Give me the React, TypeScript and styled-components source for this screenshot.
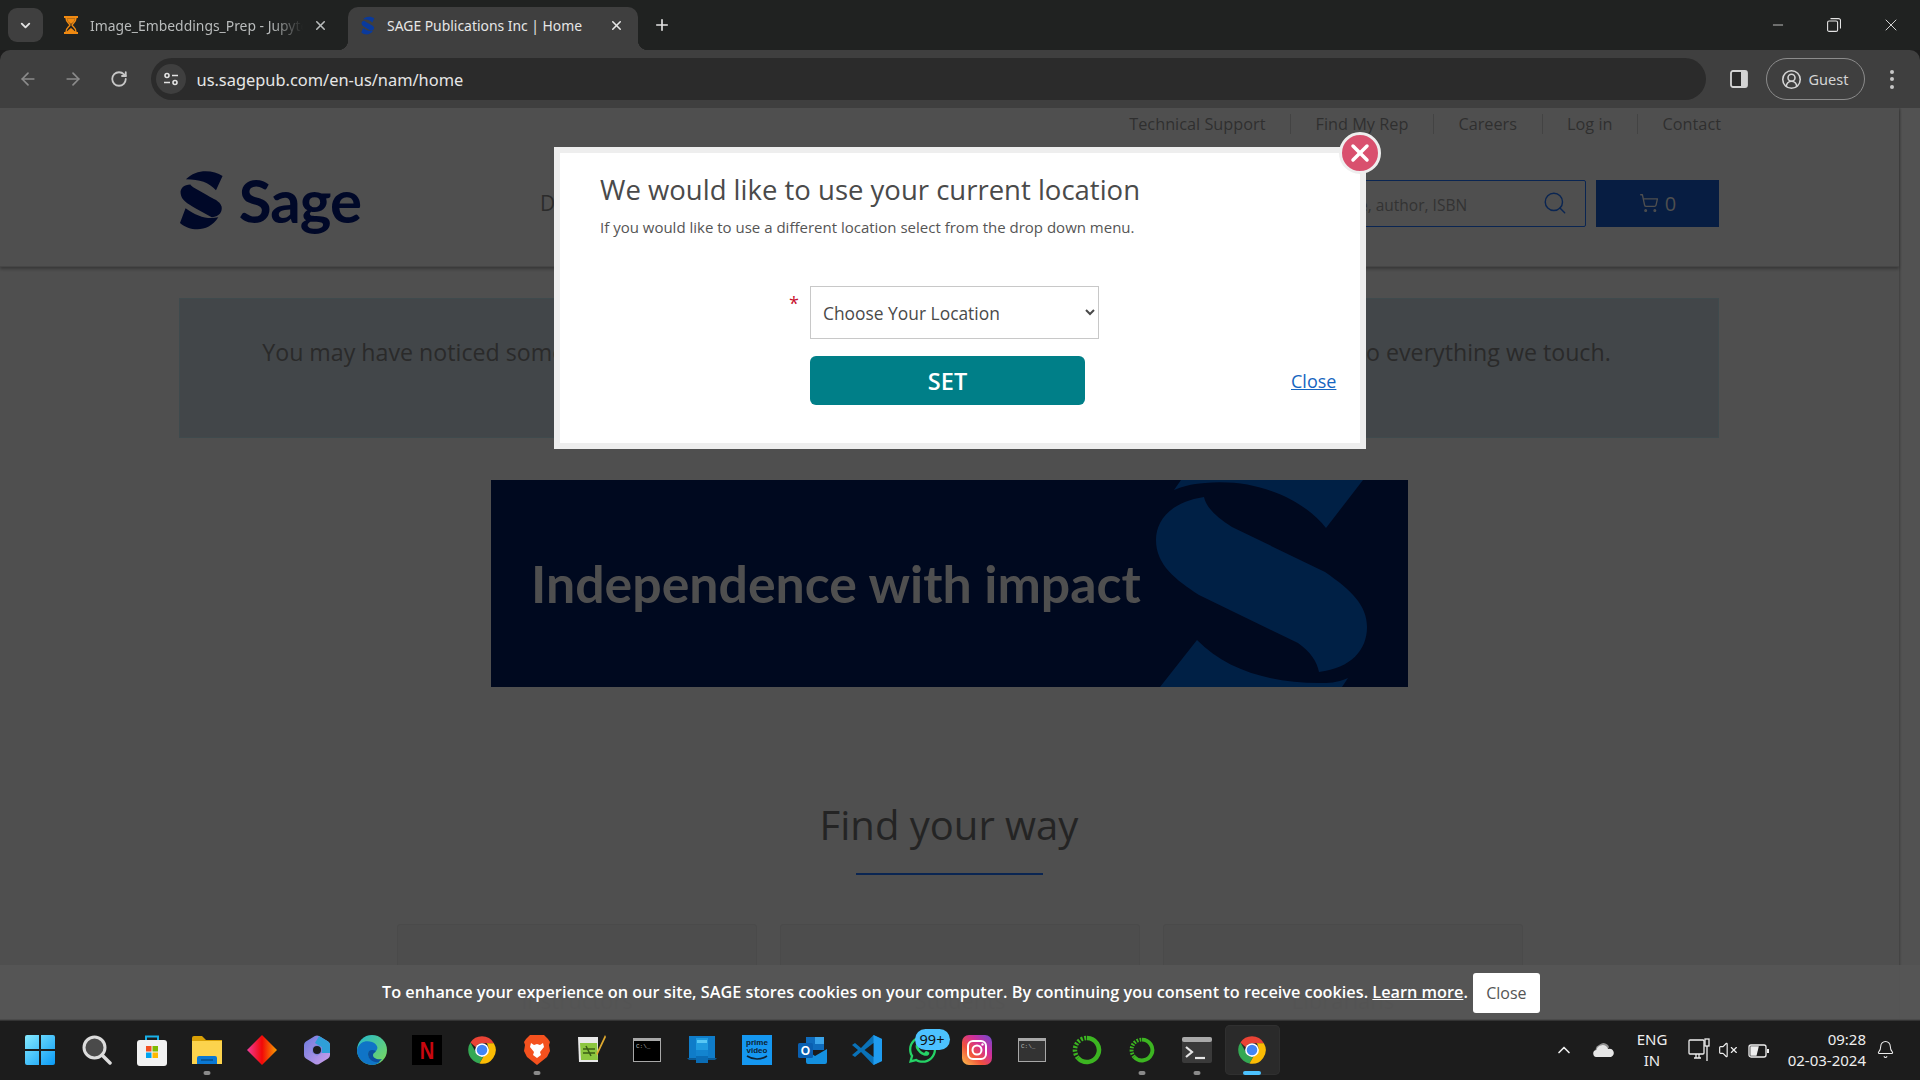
import React from "react";
import styled, { createGlobalStyle } from "styled-components";
import { FaWhatsapp } from "react-icons/fa";
import { ArrowLeft, ArrowRight, RotateCw, ChevronDown, ChevronUp, X, Plus, Minus, CircleUserRound, VolumeX, Bell, Search, ShoppingCart } from "lucide-react";

const GlobalStyle = createGlobalStyle`
  html, body { margin: 0; padding: 0; background: #1c1c1c; overflow: hidden; }
  * { box-sizing: border-box; }
`;

const chromeFont = `"Noto Sans", "Open Sans", sans-serif`;
const pageFont = `"Open Sans", "Noto Sans", sans-serif`;

const Screen = styled.div`
  width: 1920px;
  height: 1080px;
  display: flex;
  flex-direction: column;
  overflow: hidden;
  font-family: ${chromeFont};
`;

/* browser chrome */
const TabStrip = styled.div`
  height: 50px;
  flex: none;
  display: flex;
  align-items: flex-end;
  background: #202221;
  padding-left: 8px;
  color: #e3e3e3;
`;
const TabSearch = styled.div`
  width: 35px;
  height: 34px;
  margin-bottom: 8px;
  border-radius: 9px;
  background: #3f3f3f;
  display: flex;
  align-items: center;
  justify-content: center;
`;
const Tab = styled.div<{ $active?: boolean }>`
  position: relative;
  height: 43px;
  width: ${(p) => (p.$active ? 290 : 299)}px;
  margin-left: ${(p) => (p.$active ? 0 : 6)}px;
  padding: 0 ${(p) => (p.$active ? 14 : 20)}px 7px ${(p) => (p.$active ? 13 : 13)}px;
  display: flex;
  align-items: center;
  gap: ${(p) => (p.$active ? 12 : 10)}px;
  font-size: 13.900px;
  color: ${(p) => (p.$active ? "#e6e6e6" : "#b9bcbc")};
  background: ${(p) => (p.$active ? "#3f3f3f" : "transparent")};
  border-radius: 10px 10px 0 0;
  ${(p) =>
    p.$active
      ? `
    &::before, &::after {
      content: "";
      position: absolute;
      bottom: 0;
      width: 10px;
      height: 10px;
    }
    &::before { left: -10px; background: radial-gradient(circle at 0 0, transparent 10px, #3f3f3f 10.500px); }
    &::after { right: -10px; background: radial-gradient(circle at 100% 0, transparent 10px, #3f3f3f 10.500px); }
  `
      : ""}
`;
const TabTitle = styled.span<{ $fade?: boolean }>`
  flex: 1;
  white-space: nowrap;
  overflow: hidden;
  ${(p) => (p.$fade ? "mask-image: linear-gradient(90deg, #000 85%, transparent);" : "")}
`;
const NewTab = styled.div`
  width: 48px;
  margin-bottom: 16px;
  display: flex;
  justify-content: center;
`;
const WindowControls = styled.div`
  margin-left: auto;
  height: 50px;
  display: flex;
  align-items: center;
  padding-right: 1px;
`;
const WindowButton = styled.div`
  width: 56.500px;
  display: flex;
  justify-content: center;
`;

const Toolbar = styled.div`
  height: 58px;
  flex: none;
  display: flex;
  align-items: center;
  background: #3f3f3f;
  border-radius: 10px 10px 0 0;
  padding: 0 18px 0 5px;
  color: #c7c7c7;
`;
const NavButton = styled.div<{ $dim?: boolean }>`
  width: 45.500px;
  display: flex;
  justify-content: center;
  color: ${(p) => (p.$dim ? "#8b8b8b" : "#c7c7c7")};
`;
const Omnibox = styled.div`
  width: 1555px;
  height: 42px;
  margin-left: 9px;
  border-radius: 21px;
  background: #2b2b2b;
  display: flex;
  align-items: center;
  padding-left: 5px;
  gap: 11px;
  font-size: 16.400px;
  color: #e6e6e6;
`;
const SiteInfo = styled.div`
  width: 30px;
  height: 30px;
  border-radius: 50%;
  background: #3f3f3f;
  display: flex;
  align-items: center;
  justify-content: center;
`;
const ToolbarRight = styled.div`
  display: flex;
  align-items: center;
  margin-left: 24px;
`;
const GuestPill = styled.div`
  width: 99px;
  height: 42px;
  margin-left: 18px;
  border: 1px solid #8c8c8c;
  border-radius: 21px;
  display: flex;
  align-items: center;
  gap: 7px;
  padding-left: 14px;
  font-size: 14.500px;
  color: #d4d4d4;
`;
const MenuDots = styled.div`
  margin-left: 25px;
  display: flex;
  flex-direction: column;
  gap: 3.500px;
  span {
    width: 4px;
    height: 4px;
    border-radius: 50%;
    background: #c7c7c7;
  }
`;

/* page behind the dialog */
const PageArea = styled.div`
  position: relative;
  flex: 1;
  background: #525252;
  overflow: hidden;
  font-family: ${pageFont};
`;
const Page = styled.div`
  width: 1899px;
  height: 100%;
  background: #4f4f4f;
  box-shadow: 1px 0 2px rgba(0, 0, 0, 0.25);
`;
const Header = styled.header`
  height: 159px;
  padding: 0 179px;
  border-bottom: 1px solid #464646;
  box-shadow: 0 2px 3px rgba(0, 0, 0, 0.3);
`;
const TopLinks = styled.nav`
  height: 32px;
  margin-right: -1px;
  display: flex;
  justify-content: flex-end;
  align-items: center;
`;
const TopLink = styled.a`
  font-size: 16.300px;
  color: #2f2f2f;
  padding: 0 24.500px;
  border-left: 1px solid #434343;
  line-height: 20px;
  &:first-child { border-left: 0; }
  &:last-child { padding-right: 0; }
`;
const HeaderMain = styled.div`
  height: 126px;
  display: flex;
  align-items: center;
`;
const Logo = styled.div`
  width: 182px;
  display: flex;
  align-items: center;
  gap: 14px;
  color: #000828;
  font-family: Lato, sans-serif;
  font-weight: 700;
  font-size: 60px;
  letter-spacing: -1px;
  line-height: 1;
  margin-top: -6px;
`;
const NavItem = styled.span`
  margin-left: 179px;
  font-size: 21px;
  color: #2b2b2b;
  white-space: nowrap;
`;
const HeaderTools = styled.div`
  margin-left: auto;
  margin-right: 1px;
  display: flex;
  gap: 10px;
`;
const SearchBox = styled.div`
  width: 300px;
  height: 47px;
  border: 1px solid #0a2552;
  border-radius: 2px;
  display: flex;
  align-items: center;
  justify-content: flex-end;
  padding-right: 17px;
  gap: 75px;
  font-size: 15.500px;
  color: #333;
  white-space: nowrap;
  span { margin-top: 3px; }
  svg { color: #0a2552; }
`;
const CartButton = styled.div`
  width: 123px;
  height: 47px;
  background: #071d42;
  display: flex;
  align-items: center;
  justify-content: center;
  gap: 6px;
  font-size: 20px;
  color: #4f4f4f;
`;
const Container = styled.div`
  width: 1540px;
  margin: 0 0 0 179px;
`;
const Notice = styled.div`
  height: 140px;
  margin-top: 31px;
  background: #424649;
  border: 1px solid #3f4a4d;
  padding: 28px 25px 0 0;
  text-align: center;
  font-size: 23.200px;
  line-height: 50px;
  color: #2a2a2a;
  white-space: nowrap;
`;
const Banner = styled.div`
  position: relative;
  width: 917px;
  height: 207px;
  margin: 42px 0 0 312px;
  background: #00091f;
  display: flex;
  align-items: center;
  padding: 0 0 2px 40px;
  overflow: hidden;
  font-family: Lato, sans-serif;
  font-weight: 700;
  font-size: 51.800px;
  color: #4f4f4f;
`;
const BannerMark = styled.svg`
  position: absolute;
  inset: 0;
`;
const SectionTitle = styled.h2`
  margin: 109px 0 0;
  text-align: center;
  font-weight: 400;
  font-size: 40px;
  line-height: 58px;
  color: #242424;
`;
const TitleRule = styled.div`
  width: 187px;
  height: 2px;
  margin: 19px auto 0;
  background: #0a2552;
`;
const Cards = styled.div`
  margin: 49px 0 0 218px;
  width: 1125px;
  display: grid;
  grid-template-columns: repeat(3, 360px);
  gap: 23px;
`;
const Card = styled.div`
  height: 200px;
  border: 1px solid #4a4a4a;
  border-radius: 3px;
  background: #4d4d4d;
  padding-top: 60px;
  text-align: center;
  font-size: 22px;
  color: #3c3c3c;
`;

/* cookie bar */
const CookieBar = styled.div`
  position: absolute;
  left: 0;
  right: 0;
  bottom: 0;
  height: 55px;
  background: rgba(86, 86, 86, 0.92);
  border-bottom: 1px solid #4a4a4a;
  display: flex;
  align-items: center;
  padding-left: 382px;
  gap: 5px;
`;
const CookieText = styled.p`
  margin: 0;
  font-size: 16.270px;
  font-weight: 600;
  color: #fff;
  white-space: nowrap;
  a { text-decoration: underline; }
`;
const CookieClose = styled.button`
  width: 67px;
  height: 40px;
  margin-top: 2px;
  border: 0;
  border-radius: 3px;
  background: #fff;
  color: #555;
  font-family: ${pageFont};
  font-size: 16px;
`;

/* dialog */
const Modal = styled.div`
  position: absolute;
  left: 554px;
  top: 39px;
  width: 812px;
  height: 302px;
  background: #fff;
  border: 6px solid #eee;
  padding: 0 0 0 40px;
  color: #4a4a4a;
`;
const ModalTitle = styled.h3`
  margin: 15px 0 0;
  font-weight: 400;
  font-size: 27.500px;
  line-height: 44px;
  color: #4a4a4a;
`;
const ModalHint = styled.p`
  margin: 3px 0 0;
  font-size: 15px;
  line-height: 24px;
  color: #555;
`;
const FormRow = styled.div`
  margin: 47px 0 0 210px;
  display: flex;
  align-items: center;
`;
const Required = styled.span`
  width: 0;
  margin-left: -21px;
  margin-right: 21px;
  margin-top: -20px;
  color: #c8102e;
  font-size: 18px;
`;
const LocationSelect = styled.select`
  width: 289px;
  height: 53px;
  padding-left: 8px;
  border: 1px solid #c8c8c8;
  background: #fff;
  color: #4a4a4a;
  font-family: ${pageFont};
  font-size: 17.400px;
`;
const ActionRow = styled.div`
  margin: 17px 0 0 210px;
  display: flex;
  align-items: center;
`;
const SetButton = styled.button`
  width: 275px;
  height: 49px;
  border: 0;
  border-radius: 6px;
  background: #007f88;
  color: #fff;
  font-family: ${pageFont};
  font-weight: 600;
  font-size: 23.500px;
`;
const CloseLink = styled.a`
  margin-left: 206px;
  font-size: 18px;
  color: #1565c0;
  text-decoration: underline;
`;
const ModalDismiss = styled.div`
  position: absolute;
  left: 779px;
  top: -21px;
  width: 42px;
  height: 42px;
  border-radius: 50%;
  border: 3px solid #eee;
  background: #d9506e;
  color: #fff;
  display: flex;
  align-items: center;
  justify-content: center;
`;

/* taskbar */
const Taskbar = styled.footer`
  height: 60px;
  flex: none;
  background: #1c1c1c;
  border-top: 1px solid #333;
  display: flex;
  align-items: center;
  padding: 0 0 2px 12.500px;
`;
const TaskSlot = styled.div<{ $active?: boolean }>`
  position: relative;
  width: 55px;
  height: 50px;
  display: flex;
  align-items: center;
  justify-content: center;
  border-radius: 5px;
  ${(p) => (p.$active ? "background: #2a2a2a; box-shadow: inset 0 0 0 1px #303030;" : "")}
  &:first-child {
    width: 57px;
    padding-right: 2px;
  }
`;
const RunDot = styled.i<{ $active?: boolean }>`
  position: absolute;
  bottom: 0;
  left: 50%;
  transform: translateX(-50%);
  width: ${(p) => (p.$active ? 18 : 7)}px;
  height: 4px;
  border-radius: 2px;
  background: ${(p) => (p.$active ? "#4cc2ff" : "#8a8a8a")};
`;
const Badge = styled.span`
  position: absolute;
  left: 20px;
  top: 4px;
  width: 35px;
  height: 21px;
  border-radius: 10.500px;
  background: #4cc2ff;
  color: #111;
  font-size: 14.500px;
  line-height: 21px;
  text-align: center;
`;
const Tray = styled.div`
  margin-left: auto;
  display: flex;
  align-items: center;
  color: #eee;
  font-size: 15px;
  padding-right: 25px;
`;
const TrayIcon = styled.div<{ $w: number }>`
  width: ${(p) => p.$w}px;
  display: flex;
  justify-content: center;
`;
const Lang = styled.div`
  width: 50px;
  margin-right: 9px;
  text-align: center;
  line-height: 21px;
`;
const Clock = styled.div`
  width: 92px;
  text-align: right;
  line-height: 21px;
  margin-right: 10px;
`;

const SageMark = ({ size, color }: { size: number; color: string }) => (
  <svg width={size * 0.74} height={size} viewBox="25 30 140 190" fill={color}>
    <path d="M158 52C130 33 78 28 46 62C90 62 115 72 138 95Z" />
    <path d="M60 78C40 78 28 90 30 105C32 125 50 135 75 150L125 178C150 175 158 160 155 145C150 128 130 122 110 110L75 90C65 85 60 80 60 78Z" />
    <path d="M45 150L28 195C60 222 115 225 145 178C110 185 80 175 45 150Z" />
  </svg>
);

const Hourglass = () => (
  <svg width="18" height="18" viewBox="0 0 18 18">
    <path d="M2 1h14M2 17h14" stroke="#f08a12" strokeWidth="2" />
    <path d="M4 2h10c0 4-3 5-4 7 1 2 4 3 4 7H4c0-4 3-5 4-7-1-2-4-3-4-7z" fill="none" stroke="#f08a12" strokeWidth="1.400" />
    <path d="M5 3h8c-.5 3-3 4-4 5-1-1-3.500-2-4-5zM5 16c.5-2 3-3 4-4 1 1 3.500 2 4 4z" fill="#f08a12" />
  </svg>
);

const ChromeLogo = ({ size = 30 }: { size?: number }) => (
  <svg width={size} height={size} viewBox="0 0 48 48">
    <path d="M24 2a22 22 0 0 1 19 11H24a11 11 0 0 0-10 6.500L5.500 12A22 22 0 0 1 24 2z" fill="#ea4335" />
    <path d="M5.500 12L15 29a11 11 0 0 0 11 5.800L20 45.600A22 22 0 0 1 5.500 12z" fill="#34a853" />
    <path d="M43 13a22 22 0 0 1-23 32.600L29 29.500A11 11 0 0 0 31.500 13z" fill="#fbbc04" />
    <circle cx="24" cy="24" r="11" fill="#fff" />
    <circle cx="24" cy="24" r="8.500" fill="#4285f4" />
  </svg>
);

const WindowsIcon = () => (
  <svg width="30" height="30" viewBox="0 0 30 30">
    <defs>
      <linearGradient id="win" x1="0" y1="0" x2="1" y2="1">
        <stop offset="0" stopColor="#86eaff" />
        <stop offset="1" stopColor="#0a9af5" />
      </linearGradient>
    </defs>
    <path d="M2 0h12v14H0V2a2 2 0 0 1 2-2zM16 0h12a2 2 0 0 1 2 2v12H16zM0 16h14v14H2a2 2 0 0 1-2-2zM16 16h14v12a2 2 0 0 1-2 2H16z" fill="url(#win)" />
  </svg>
);
const SearchIcon = () => (
  <svg width="30" height="30" viewBox="0 0 30 30">
    <circle cx="12.500" cy="12.500" r="10.500" fill="#4a4a4a" stroke="#dcdcdc" strokeWidth="3" />
    <path d="M20 20l8 8" stroke="#dcdcdc" strokeWidth="3.500" strokeLinecap="round" />
  </svg>
);
const StoreIcon = () => (
  <svg width="30" height="32" viewBox="0 0 30 32">
    <path d="M9 7V2.500h12V7" fill="none" stroke="#18b0e8" strokeWidth="2" />
    <path d="M3 6h24a3 3 0 0 1 3 3v20a3 3 0 0 1-3 3H3a3 3 0 0 1-3-3V9a3 3 0 0 1 3-3z" fill="#f2f2f2" />
    <rect x="9" y="12" width="5.500" height="5.500" fill="#f25022" />
    <rect x="15.500" y="12" width="5.500" height="5.500" fill="#7fba00" />
    <rect x="9" y="18.500" width="5.500" height="5.500" fill="#00a4ef" />
    <rect x="15.500" y="18.500" width="5.500" height="5.500" fill="#ffb900" />
  </svg>
);
const FolderIcon = () => (
  <svg width="30" height="28" viewBox="0 0 30 28">
    <path d="M0 2a2 2 0 0 1 2-2h8l4 4h16v4H0z" fill="#d9a006" />
    <path d="M0 5h30v23H0z" fill="#fcd34d" />
    <path d="M5 22a2 2 0 0 1 2-2h16a2 2 0 0 1 2 2v6H5z" fill="#0a78d4" />
    <path d="M9 24h12" stroke="#064f8c" strokeWidth="1.500" />
  </svg>
);
const DiamondIcon = () => (
  <svg width="30" height="30" viewBox="0 0 30 30">
    <defs>
      <linearGradient id="dia" x1="0" y1="0" x2="1" y2="0">
        <stop offset="0" stopColor="#f03d9c" />
        <stop offset=".5" stopColor="#f20808" />
        <stop offset="1" stopColor="#f7a000" />
      </linearGradient>
    </defs>
    <path d="M15 0l15 15-15 15L0 15z" fill="url(#dia)" />
  </svg>
);
const CopilotIcon = () => (
  <svg width="28" height="30" viewBox="0 0 28 30">
    <defs>
      <linearGradient id="cop" x1="0" y1="0" x2="1" y2="1">
        <stop offset="0" stopColor="#7a80e0" />
        <stop offset="1" stopColor="#c09ae8" />
      </linearGradient>
    </defs>
    <path d="M14 4.500l9 5.500v10l-9 5.500L5 20V10z" fill="#7f84de" stroke="url(#cop)" strokeWidth="8" strokeLinejoin="round" />
    <path d="M14 4.500l9 5.500v8" fill="none" stroke="#2f9fd8" strokeWidth="8" strokeLinejoin="round" />
    <circle cx="14" cy="15" r="4" fill="#1c1c1c" />
  </svg>
);
const EdgeIcon = () => (
  <svg width="30" height="30" viewBox="0 0 30 30">
    <defs>
      <linearGradient id="edg" x1="0" y1="0" x2="1" y2="1">
        <stop offset="0" stopColor="#22b8cf" />
        <stop offset="1" stopColor="#7ed957" />
      </linearGradient>
    </defs>
    <circle cx="15" cy="15" r="15" fill="url(#edg)" />
    <path d="M0 15C2 6 10 5 15 7c5 2 7 6 4 9-4 0-8-1-8 3 0 4 5 8 12 8-3 2-5 3-8 3A15 15 0 0 1 0 15z" fill="#0f74c7" />
    <path d="M11 19c0-4 4-5 8-3-1 2-3 2-3 4 0 3 4 5 9 4-1 1-2 2-3 3-6 1-11-3-11-8z" fill="#0b4f9e" />
  </svg>
);
const NetflixIcon = () => (
  <svg width="30" height="30" viewBox="0 0 30 30">
    <rect width="30" height="30" fill="#000" />
    <text x="15" y="24" textAnchor="middle" fontFamily="Liberation Sans, sans-serif" fontWeight="700" fontSize="24" fill="#c8070f" transform="translate(2.400 0) scale(.84 1)">N</text>
  </svg>
);
const BraveIcon = () => (
  <svg width="26" height="30" viewBox="0 0 26 30">
    <path d="M6 0h14l4 4 2 3-1 3 1 6-3 6-10 8-10-8-3-6 1-6-1-3 2-3z" fill="#f4511e" />
    <path d="M7 8l3 2 3-1 3 1 3-2 1 4-4 5 1 3-4 3-4-3 1-3-4-5z" fill="#fff" />
  </svg>
);
const NotepadIcon = () => (
  <svg width="30" height="30" viewBox="0 0 30 30">
    <path d="M1 2h20v25H2z" fill="#e9e9e9" />
    <path d="M3 8h17l1 17H4z" fill="#8cc63f" />
    <path d="M6 14h12M6 18h12M9 11l5 10" stroke="#3b5d16" strokeWidth="1.500" fill="none" />
    <path d="M28 0l-9 19 1.500 1L29 2z" fill="#e0a92f" />
  </svg>
);
const CmdIcon = ({ light }: { light?: boolean }) => (
  <svg width="28" height="24" viewBox="0 0 28 24">
    <rect x=".5" y=".5" width="27" height="23" fill={light ? "#333" : "#000"} stroke="#a8a8a8" />
    <rect x="1" y="1" width="26" height="2" fill="#a8a8a8" />
    <text x="3" y="10" fontFamily="Liberation Mono, monospace" fontSize="6" fill="#bbb">C:\_</text>
  </svg>
);
const DeviceIcon = () => (
  <svg width="30" height="28" viewBox="0 0 30 28">
    <path d="M2 0h26v22H2z" fill="#0f7cc9" />
    <path d="M0 22h30l-2 2H2z" fill="#0a5a96" />
    <path d="M9 2h12v25H9z" fill="#1f9be0" />
    <path d="M9 14h12v6H9z" fill="#1384cf" />
    <path d="M9 20h12v7H9z" fill="#0a6cb5" />
    <path d="M10 4h10v3H10z" fill="#58c8f5" />
  </svg>
);
const PrimeIcon = () => (
  <svg width="30" height="30" viewBox="0 0 30 30">
    <rect width="30" height="30" fill="#1597f0" />
    <g fontFamily="Liberation Sans, sans-serif" fontWeight="700" fontSize="8" fill="#0d2233" textAnchor="middle">
      <text x="15" y="10">prime</text>
      <text x="15" y="18">video</text>
    </g>
    <path d="M5 21c6 4 14 4 20 0" stroke="#0d2233" strokeWidth="1.600" fill="none" />
  </svg>
);
const OutlookIcon = () => (
  <svg width="29" height="28" viewBox="0 0 29 28">
    <path d="M8 1h18v13H8z" fill="#0f6cbd" />
    <path d="M17 1h9v7h-9z" fill="#3aa4ea" />
    <path d="M8 14l9 6 12-7v13a2 2 0 0 1-2 2H10a2 2 0 0 1-2-2z" fill="#1490df" />
    <rect x="0" y="7" width="15" height="15" rx="1.500" fill="#0a5fb0" />
    <text x="7.500" y="19" textAnchor="middle" fontFamily="Liberation Sans, sans-serif" fontWeight="700" fontSize="12" fill="#fff">O</text>
  </svg>
);
const VscodeIcon = () => (
  <svg width="30" height="30" viewBox="0 0 30 30">
    <path d="M21.500 0L30 4v22l-8.500 4L9 17l-6 5-3-2 6-5-6-5 3-2 6 5z" fill="#0a72b8" />
    <path d="M21.500 0L30 4v22l-8.500 4z" fill="#1f9cf0" />
    <path d="M21.500 8L12.500 15l9 7z" fill="#1c1c1c" />
  </svg>
);
const InstagramIcon = () => (
  <svg width="30" height="30" viewBox="0 0 30 30">
    <defs>
      <linearGradient id="ig" x1="0" y1="1" x2="1" y2="0">
        <stop offset="0" stopColor="#fdc34d" />
        <stop offset=".35" stopColor="#f1523c" />
        <stop offset=".65" stopColor="#d02f9a" />
        <stop offset="1" stopColor="#6a4bd3" />
      </linearGradient>
    </defs>
    <rect width="30" height="30" rx="7" fill="url(#ig)" />
    <rect x="6" y="6" width="18" height="18" rx="5" fill="none" stroke="#fff" strokeWidth="2" />
    <circle cx="15" cy="15" r="4.500" fill="none" stroke="#fff" strokeWidth="2" />
    <circle cx="20.500" cy="9.500" r="1.200" fill="#fff" />
  </svg>
);
const RingIcon = ({ size }: { size: number }) => (
  <svg width={size} height={size} viewBox="0 0 30 30">
    <path d="M15 3a12 12 0 1 1-9 20" fill="none" stroke="#3cb521" strokeWidth="4.500" />
    <path d="M6 23A12 12 0 0 1 15 3" fill="none" stroke="#3cb521" strokeWidth="4.500" strokeDasharray="2 1.500" />
  </svg>
);
const TerminalIcon = () => (
  <svg width="30" height="26" viewBox="0 0 30 26">
    <rect width="30" height="26" rx="2" fill="#3a3a3a" />
    <rect width="30" height="5" rx="2" fill="#a9a9a9" />
    <path d="M4 10l6 5-6 5" fill="none" stroke="#e6e6e6" strokeWidth="2.200" />
    <path d="M13 21h10" stroke="#e6e6e6" strokeWidth="2.200" />
  </svg>
);

const taskItems: { id: string; icon: React.ReactNode; run?: boolean; active?: boolean; badge?: string }[] = [
  { id: "start", icon: <WindowsIcon /> },
  { id: "search", icon: <SearchIcon /> },
  { id: "store", icon: <StoreIcon /> },
  { id: "files", icon: <FolderIcon />, run: true },
  { id: "diamond", icon: <DiamondIcon /> },
  { id: "copilot", icon: <CopilotIcon /> },
  { id: "edge", icon: <EdgeIcon /> },
  { id: "netflix", icon: <NetflixIcon /> },
  { id: "chrome", icon: <ChromeLogo /> },
  { id: "brave", icon: <BraveIcon />, run: true },
  { id: "notepad", icon: <NotepadIcon /> },
  { id: "cmd", icon: <CmdIcon /> },
  { id: "device", icon: <DeviceIcon /> },
  { id: "prime", icon: <PrimeIcon /> },
  { id: "outlook", icon: <OutlookIcon /> },
  { id: "vscode", icon: <VscodeIcon /> },
  { id: "whatsapp", icon: <FaWhatsapp size={31} color="#25d366" />, badge: "99+" },
  { id: "instagram", icon: <InstagramIcon /> },
  { id: "cmd2", icon: <CmdIcon light /> },
  { id: "ring", icon: <RingIcon size={30} /> },
  { id: "ring2", icon: <RingIcon size={26} />, run: true },
  { id: "terminal", icon: <TerminalIcon />, run: true },
  { id: "chrome2", icon: <ChromeLogo />, run: true, active: true },
];

export default function App() {
  return (
    <Screen>
      <GlobalStyle />
      <TabStrip>
        <TabSearch>
          <ChevronDown size={15} strokeWidth={3} />
        </TabSearch>
        <Tab>
          <Hourglass />
          <TabTitle $fade>Image_Embeddings_Prep - Jupyter Notebook</TabTitle>
          <X size={15} strokeWidth={2.5} />
        </Tab>
        <Tab $active>
          <SageMark size={19} color="#0a3a9c" />
          <TabTitle>SAGE Publications Inc | Home</TabTitle>
          <X size={15} strokeWidth={2.5} />
        </Tab>
        <NewTab>
          <Plus size={18} strokeWidth={2.2} />
        </NewTab>
        <WindowControls>
          <WindowButton>
            <Minus size={16} strokeWidth={1.2} />
          </WindowButton>
          <WindowButton>
            <svg width="14" height="14" viewBox="0 0 14 14" fill="none" stroke="#e3e3e3" strokeWidth="1.100">
              <rect x=".6" y="3" width="10" height="10.400" rx="1.500" />
              <path d="M3.500 .6h8a2 2 0 0 1 2 2v8" />
            </svg>
          </WindowButton>
          <WindowButton>
            <X size={20} strokeWidth={1.1} />
          </WindowButton>
        </WindowControls>
      </TabStrip>

      <Toolbar>
        <NavButton $dim>
          <ArrowLeft size={20} />
        </NavButton>
        <NavButton $dim>
          <ArrowRight size={20} />
        </NavButton>
        <NavButton>
          <RotateCw size={18} strokeWidth={2.4} />
        </NavButton>
        <Omnibox>
          <SiteInfo>
            <svg width="16" height="16" viewBox="0 0 16 16" fill="none" stroke="#e3e3e3" strokeWidth="1.600">
              <circle cx="4" cy="4.500" r="2" />
              <path d="M9 4.500h6M1 11.500h6" />
              <circle cx="12" cy="11.500" r="2" />
            </svg>
          </SiteInfo>
          us.sagepub.com/en-us/nam/home
        </Omnibox>
        <ToolbarRight>
          <svg width="18" height="18" viewBox="0 0 18 18">
            <rect x="1" y="1" width="16" height="16" rx="2" fill="#2b2b2b" stroke="#d4d4d4" strokeWidth="1.800" />
            <rect x="11" y="1" width="6" height="16" fill="#d4d4d4" />
          </svg>
          <GuestPill>
            <CircleUserRound size={21} strokeWidth={1.8} />
            Guest
          </GuestPill>
          <MenuDots>
            <span />
            <span />
            <span />
          </MenuDots>
        </ToolbarRight>
      </Toolbar>

      <PageArea>
        <Page>
          <Header>
            <TopLinks>
              <TopLink>Technical Support</TopLink>
              <TopLink>Find My Rep</TopLink>
              <TopLink>Careers</TopLink>
              <TopLink>Log in</TopLink>
              <TopLink>Contact</TopLink>
            </TopLinks>
            <HeaderMain>
              <Logo>
                <SageMark size={64} color="#000828" />
                Sage
              </Logo>
              <NavItem>Disciplines</NavItem>
              <HeaderTools>
                <SearchBox>
                  <span>Search title, author, ISBN</span>
                  <Search size={28} strokeWidth={1.3} />
                </SearchBox>
                <CartButton>
                  <ShoppingCart size={20} strokeWidth={1.6} />0
                </CartButton>
              </HeaderTools>
            </HeaderMain>
          </Header>
          <Container>
            <Notice>You may have noticed some changes to our website. We've refreshed our brand and bring our values to everything we touch.</Notice>
            <Banner>
              Independence with impact
              <BannerMark viewBox="0 0 917 207" width="917" height="207">
                <g fill="#002045">
                  <path d="M713 17C680 22 665 40 665 60C665 85 685 100 708 115L807 163C820 172 826 182 828 192C860 188 876 170 876 147C876 125 860 110 834 92L741 47C725 37 715 27 713 17Z" />
                  <path d="M690 0H872L835 48C815 22 770 -2 714 3C700 4 690 7 683 10Z" />
                  <path d="M706 160L669 207H851L857 198C845 203 838 203 828 203C780 203 735 190 706 160Z" />
                </g>
              </BannerMark>
            </Banner>
            <SectionTitle>Find your way</SectionTitle>
            <TitleRule />
            <Cards>
              <Card>Instructors</Card>
              <Card>Students</Card>
              <Card>Librarians</Card>
            </Cards>
          </Container>
        </Page>

        <CookieBar>
          <CookieText>
            To enhance your experience on our site, SAGE stores cookies on your computer. By continuing you consent to receive cookies. <a>Learn more</a>.
          </CookieText>
          <CookieClose>Close</CookieClose>
        </CookieBar>

        <Modal>
          <ModalDismiss>
            <X size={28} strokeWidth={3} />
          </ModalDismiss>
          <ModalTitle>We would like to use your current location</ModalTitle>
          <ModalHint>If you would like to use a different location select from the drop down menu.</ModalHint>
          <FormRow>
            <Required>*</Required>
            <LocationSelect defaultValue="">
              <option value="">Choose Your Location</option>
            </LocationSelect>
          </FormRow>
          <ActionRow>
            <SetButton>SET</SetButton>
            <CloseLink>Close</CloseLink>
          </ActionRow>
        </Modal>
      </PageArea>

      <Taskbar>
        {taskItems.map((item) => (
          <TaskSlot key={item.id} $active={item.active}>
            {item.icon}
            {item.badge && <Badge>{item.badge}</Badge>}
            {item.run && <RunDot $active={item.active} />}
          </TaskSlot>
        ))}
        <Tray>
          <TrayIcon $w={34}>
            <ChevronUp size={20} strokeWidth={2} />
          </TrayIcon>
          <TrayIcon $w={46}>
            <svg width="22" height="14" viewBox="0 0 22 14">
              <path d="M5 11a5 5 0 0 1 1-9 6 6 0 0 1 10 2l-4 7z" fill="#8f8f8f" />
              <path d="M4 14a3.500 3.500 0 0 1-.5-7A6 6 0 0 1 15 6a4 4 0 0 1 3 8z" fill="#e6e6e6" />
            </svg>
          </TrayIcon>
          <Lang>
            ENG
            <br />
            IN
          </Lang>
          <TrayIcon $w={26}>
            <svg width="22" height="24" viewBox="0 0 22 24" fill="none" stroke="#eee" strokeWidth="1.300">
              <rect x="1" y="2" width="15" height="14" rx="1" />
              <path d="M6 20h7M8 16v4M11 16v4M19 8v15" />
              <rect x="17" y="1" width="4" height="7" fill="#1c1c1c" />
            </svg>
          </TrayIcon>
          <TrayIcon $w={32}>
            <VolumeX size={20} strokeWidth={1.4} />
          </TrayIcon>
          <TrayIcon $w={30}>
            <svg width="22" height="18" viewBox="0 0 22 18" fill="none" stroke="#eee" strokeWidth="1.300">
              <rect x="1" y="4" width="17" height="12" rx="2" />
              <path d="M20 8v4" strokeWidth="2" />
              <path d="M3 6h7l-2 8H3z" fill="#eee" />
            </svg>
          </TrayIcon>
          <Clock>
            09:28
            <br />
            02-03-2024
          </Clock>
          <Bell size={19} strokeWidth={1.3} />
        </Tray>
      </Taskbar>
    </Screen>
  );
}
